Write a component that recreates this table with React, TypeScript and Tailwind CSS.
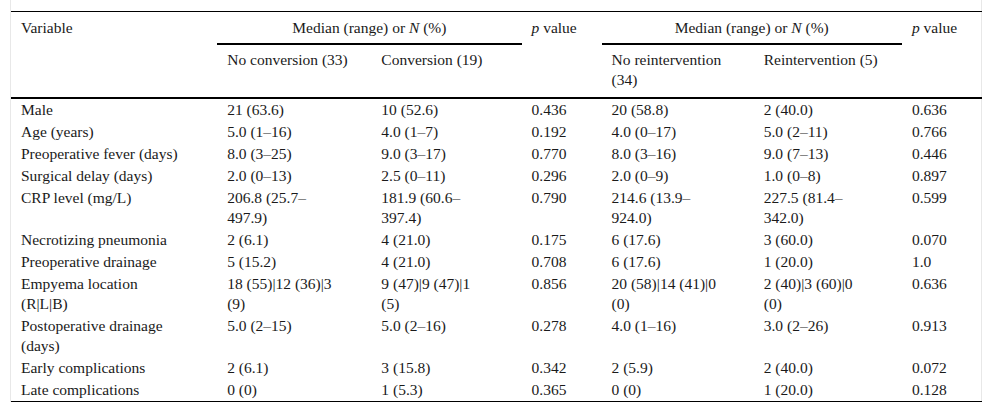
import React from 'react'

type Row = { label: string; cells: string[] }

// line breaks follow the source table's wrapping
const ROWS: Row[] = [
  { label: 'Male', cells: ['21 (63.6)', '10 (52.6)', '0.436', '20 (58.8)', '2 (40.0)', '0.636'] },
  { label: 'Age (years)', cells: ['5.0 (1–16)', '4.0 (1–7)', '0.192', '4.0 (0–17)', '5.0 (2–11)', '0.766'] },
  {
    label: 'Preoperative fever (days)',
    cells: ['8.0 (3–25)', '9.0 (3–17)', '0.770', '8.0 (3–16)', '9.0 (7–13)', '0.446'],
  },
  {
    label: 'Surgical delay (days)',
    cells: ['2.0 (0–13)', '2.5 (0–11)', '0.296', '2.0 (0–9)', '1.0 (0–8)', '0.897'],
  },
  {
    label: 'CRP level (mg/L)',
    cells: [
      '206.8 (25.7–\n497.9)',
      '181.9 (60.6–\n397.4)',
      '0.790',
      '214.6 (13.9–\n924.0)',
      '227.5 (81.4–\n342.0)',
      '0.599',
    ],
  },
  { label: 'Necrotizing pneumonia', cells: ['2 (6.1)', '4 (21.0)', '0.175', '6 (17.6)', '3 (60.0)', '0.070'] },
  { label: 'Preoperative drainage', cells: ['5 (15.2)', '4 (21.0)', '0.708', '6 (17.6)', '1 (20.0)', '1.0'] },
  {
    label: 'Empyema location\n(R|L|B)',
    cells: [
      '18 (55)|12 (36)|3\n(9)',
      '9 (47)|9 (47)|1\n(5)',
      '0.856',
      '20 (58)|14 (41)|0\n(0)',
      '2 (40)|3 (60)|0\n(0)',
      '0.636',
    ],
  },
  {
    label: 'Postoperative drainage\n(days)',
    cells: ['5.0 (2–15)', '5.0 (2–16)', '0.278', '4.0 (1–16)', '3.0 (2–26)', '0.913'],
  },
  { label: 'Early complications', cells: ['2 (6.1)', '3 (15.8)', '0.342', '2 (5.9)', '2 (40.0)', '0.072'] },
  { label: 'Late complications', cells: ['0 (0)', '1 (5.3)', '0.365', '0 (0)', '1 (20.0)', '0.128'] },
]

const COL_WIDTHS = [206, 154, 150, 80, 152, 148, 80]

export default function App() {
  return (
    <div className="bg-white text-[#1a1a1a] font-['Liberation_Serif',serif] text-[15.5px] leading-[20px]">
      <div className="ml-[10px] w-[972px] border-x border-[#e8e8e8] pt-[11px]">
        <table className="w-[971px] table-fixed border-collapse border-t border-b border-black">
          <colgroup>
            {COL_WIDTHS.map((w, i) => (
              <col key={i} style={{ width: w }} />
            ))}
          </colgroup>
          <thead>
            <tr className="align-top text-left">
              <th rowSpan={2} className="font-normal px-[10px] pt-[6px]">
                Variable
              </th>
              <th colSpan={2} className="font-normal text-center pt-[6px] pb-[5px] border-b-2 border-black">
                Median (range) or <i>N</i> (%)
              </th>
              <th rowSpan={2} className="font-normal px-[10px] pt-[6px]">
                <i>p</i> value
              </th>
              <th colSpan={2} className="font-normal text-center pt-[6px] pb-[5px] border-b-2 border-black">
                Median (range) or <i>N</i> (%)
              </th>
              <th rowSpan={2} className="font-normal px-[10px] pt-[6px]">
                <i>p</i> value
              </th>
            </tr>
            <tr className="align-top text-left border-b-2 border-black">
              <th className="font-normal px-[10px] pt-[5px] pb-[7px]">No conversion (33)</th>
              <th className="font-normal px-[10px] pt-[5px] pb-[7px]">Conversion (19)</th>
              <th className="font-normal px-[10px] pt-[5px] pb-[7px]">No reintervention (34)</th>
              <th className="font-normal px-[10px] pt-[5px] pb-[7px]">Reintervention (5)</th>
            </tr>
          </thead>
          <tbody>
            {ROWS.map((r) => (
              <tr key={r.label} className="align-top">
                <td className="px-[10px] py-[1px] whitespace-pre-line">{r.label}</td>
                {r.cells.map((c, i) => (
                  <td key={i} className="px-[10px] py-[1px] whitespace-pre-line">
                    {c}
                  </td>
                ))}
              </tr>
            ))}
          </tbody>
        </table>
      </div>
    </div>
  )
}
